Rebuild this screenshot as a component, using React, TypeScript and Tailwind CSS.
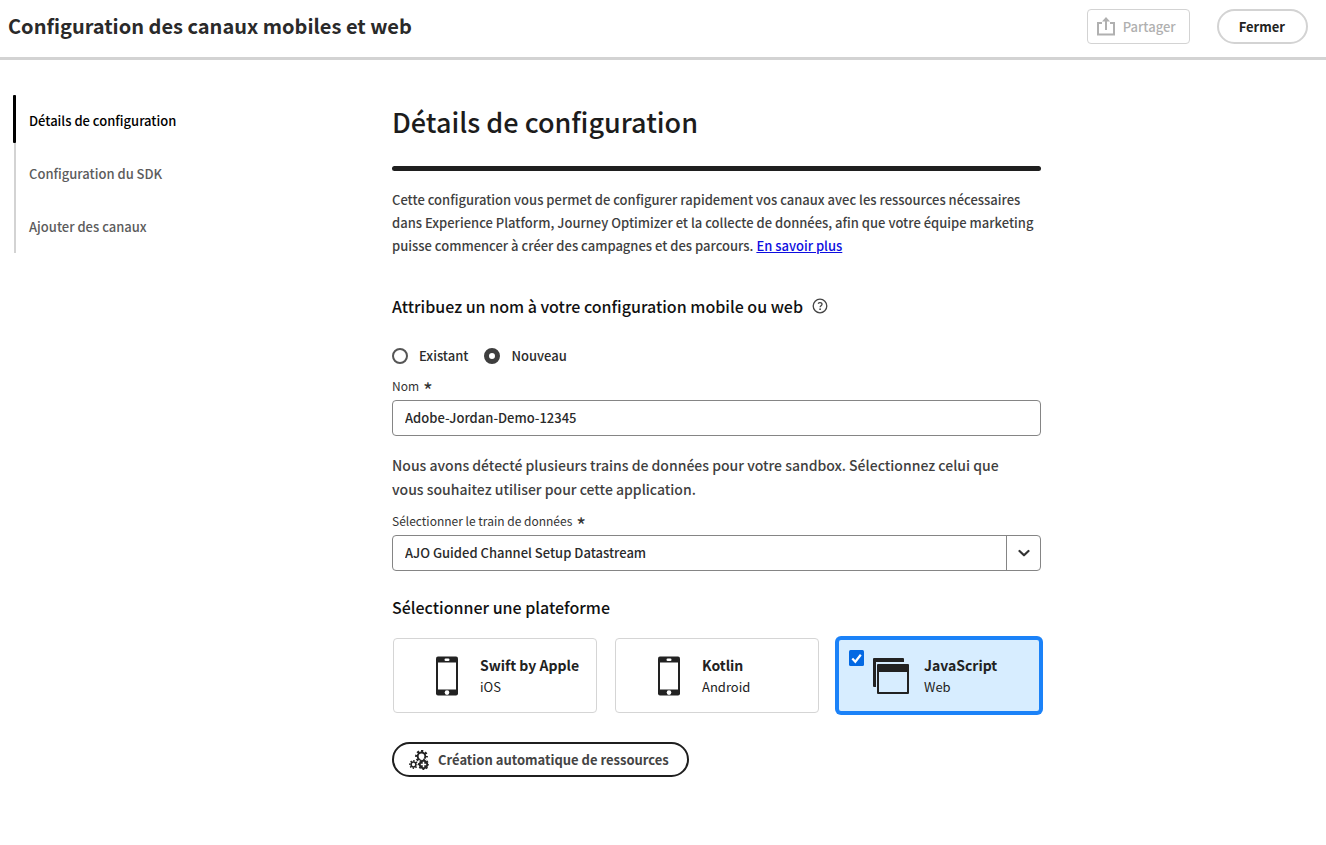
import { useState, type ReactNode } from "react";

function ShareIcon() {
  return (
    <svg viewBox="0 0 18 19" className="h-[19px] w-[18px]" fill="none" stroke="currentColor" strokeWidth="2" aria-hidden="true">
      <path d="M5 6H1V17.500H17V6H13" />
      <path d="M9 13V3" />
      <path d="M9 0l4 4.400H5z" fill="currentColor" stroke="none" />
    </svg>
  );
}

function HelpIcon() {
  return (
    <svg viewBox="0 0 16 16" className="size-4" fill="none" stroke="currentColor" strokeWidth="1.300" aria-hidden="true">
      <circle cx="8" cy="8" r="6.800" />
      <path d="M6.100 5.600C6.600 4.900 7.300 4.600 8 4.600c1.200 0 2 .7 2 1.700 0 1.300-1.900 1.500-1.900 2.900" />
      <circle cx="8.100" cy="11.200" r="0.900" fill="currentColor" stroke="none" />
    </svg>
  );
}

function PhoneIcon() {
  return (
    <svg viewBox="0 0 24 40" className="h-10 w-6" aria-hidden="true">
      <rect x="1" y="0.500" width="22" height="39" rx="2" fill="#222" />
      <rect x="3" y="6.500" width="18" height="27" fill="#fff" />
      <rect x="9.500" y="2.500" width="5" height="2.500" rx="1.200" fill="#fff" />
      <circle cx="12" cy="36.600" r="2.300" fill="#fff" />
    </svg>
  );
}

function WindowsIcon() {
  return (
    <svg viewBox="0 0 36 36" className="size-9" aria-hidden="true">
      <path d="M1 0h29a1 1 0 0 1 1 1v3H3v25H1a1 1 0 0 1-1-1V1a1 1 0 0 1 1-1z" fill="#222" />
      <path d="M5 6h30a1 1 0 0 1 1 1v28a1 1 0 0 1-1 1H5a1 1 0 0 1-1-1V7a1 1 0 0 1 1-1zM6 14v20h28V14z" fill="#222" fillRule="evenodd" />
    </svg>
  );
}

function GearsIcon() {
  return (
    <svg viewBox="0 0 20 20" className="size-5" fill="none" stroke="#222" aria-hidden="true">
      <circle cx="12.500" cy="6.300" r="3.800" strokeWidth="1.900" />
      <circle cx="12.500" cy="6.300" r="5.300" strokeWidth="2.200" strokeDasharray="2.200 1.963" strokeDashoffset="1.100" />
      <circle cx="4.500" cy="14.500" r="2.400" strokeWidth="1.500" />
      <circle cx="4.500" cy="14.500" r="3.600" strokeWidth="1.600" strokeDasharray="1.400 1.427" strokeDashoffset="0.700" />
      <circle cx="14.500" cy="14.500" r="5.900" fill="#fff" stroke="none" />
      <circle cx="14.500" cy="14.500" r="4.700" fill="#222" stroke="none" />
      <circle cx="14.500" cy="14.500" r="4.900" strokeWidth="1.200" strokeDasharray="2 1.848" strokeDashoffset="1" />
      <path d="M14.500 11.800v5.400M11.800 14.500h5.400" stroke="#fff" strokeWidth="1.500" />
    </svg>
  );
}

function RequiredMark() {
  return <span className="pt-2 text-[21px] leading-4">*</span>;
}

const steps = ["Détails de configuration", "Configuration du SDK", "Ajouter des canaux"];

type Platform = { id: string; name: string; system: string; icon: ReactNode };

const platforms: Platform[] = [
  { id: "ios", name: "Swift by Apple", system: "iOS", icon: <PhoneIcon /> },
  { id: "android", name: "Kotlin", system: "Android", icon: <PhoneIcon /> },
  { id: "web", name: "JavaScript", system: "Web", icon: <WindowsIcon /> },
];

function PlatformCard({ platform, checked, onSelect }: { platform: Platform; checked: boolean; onSelect: () => void }) {
  return (
    <label
      className={
        checked
          ? "relative flex h-[75px] cursor-pointer items-center rounded-sm border-2 border-[#1b82f8] bg-[#d7edff] pl-[34px] ring-2 ring-[#1b82f8]"
          : "relative flex h-[75px] cursor-pointer items-center rounded-sm border border-[#d5d5d5] bg-white pl-[35px]"
      }
    >
      <input type="checkbox" checked={checked} onChange={onSelect} className="sr-only" />
      {checked && (
        <svg viewBox="0 0 15 16" className="absolute top-2.5 left-2.5 h-4 w-[15px]" aria-hidden="true">
          <rect width="15" height="16" rx="1.500" fill="#0469e3" />
          <path d="M3.300 8.500l3 3.200 5.500-7" fill="none" stroke="#fff" strokeWidth="2.200" />
        </svg>
      )}
      <span className="flex w-9 shrink-0 justify-center">{platform.icon}</span>
      <span className="ml-[15px] flex flex-col text-[#222]">
        <span className="text-[14px] leading-[22px] font-bold">{platform.name}</span>
        <span className="text-[13px] leading-[22px]">{platform.system}</span>
      </span>
    </label>
  );
}

export default function App() {
  const [mode, setMode] = useState("new");
  const [name, setName] = useState("Adobe-Jordan-Demo-12345");
  const [platform, setPlatform] = useState("web");

  return (
    <div className="min-h-screen bg-white font-['Noto_Sans_CJK_SC','Noto_Sans',sans-serif] text-[#2c2c2c]">
      <header className="flex h-[60px] items-center justify-between border-b-[3px] border-[#d3d3d3] pr-[18px] pb-1 pl-2">
        <h1 className="pb-0.5 text-[20px] leading-7 font-bold text-[#2a2a2a]">Configuration des canaux mobiles et web</h1>
        <div className="flex items-center gap-[27px]">
          <button type="button" disabled className="flex h-[35px] items-center gap-2 rounded-sm border border-[#d3d3d3] pr-[13px] pl-[9px] text-[13px] font-medium text-[#b0b0b0]">
            <ShareIcon />
            Partager
          </button>
          <button type="button" className="h-[35px] rounded-full border-2 border-[#d3d3d3] pr-[21px] pl-5 text-[13px] font-bold text-[#222]">
            Fermer
          </button>
        </div>
      </header>

      <div className="flex pt-[35px]">
        <nav aria-label="Étapes" className="w-[392px] shrink-0 pl-3.5">
          <ol className="flex flex-col gap-px border-l-2 border-[#d3d3d3]">
            {steps.map((step, index) => (
              <li key={step} className="relative flex h-[52px] items-center pl-[13px]">
                {index === 0 && <span className="absolute top-0 -left-[3px] h-12 w-[3px] rounded-[1px] bg-black" />}
                <a
                  href="#"
                  aria-current={index === 0 ? "step" : undefined}
                  className={index === 0 ? "text-[13px] leading-5 font-medium text-black" : "text-[13px] leading-5 font-medium text-[#5c5c5c]"}
                >
                  {step}
                </a>
              </li>
            ))}
          </ol>
        </nav>

        <main className="max-w-[649px] min-w-0 flex-1 pb-16">
          <h2 className="pt-[7px] text-[27px] leading-10 font-medium text-[#1c1c1c]">Détails de configuration</h2>
          <div className="mt-6 h-[5px] rounded-full bg-[#1f1f1f]" />
          <p className="mt-[17px] text-[13px] leading-[23px] font-medium text-[#3f3f3f]">
            Cette configuration vous permet de configurer rapidement vos canaux avec les ressources nécessaires dans Experience
            Platform, Journey Optimizer et la collecte de données, afin que votre équipe marketing puisse commencer à créer des
            campagnes et des parcours.{" "}
            <a href="#" className="text-[#0d0de0] underline">
              En savoir plus
            </a>
          </p>

          <div className="mt-[37px] flex items-center gap-[9px]">
            <h3 className="text-[16px] leading-6 font-medium text-[#111]">Attribuez un nom à votre configuration mobile ou web</h3>
            <button type="button" aria-label="Aide" className="text-[#444]">
              <HelpIcon />
            </button>
          </div>

          <div className="mt-[26px] flex gap-4 text-[13px] leading-6 font-medium">
            <label className="flex items-center gap-[11px]">
              <input
                type="radio"
                name="mode"
                checked={mode === "existing"}
                onChange={() => setMode("existing")}
                className="size-4 appearance-none rounded-full border-2 border-[#555] bg-white checked:border-[5px] checked:border-[#3e3e3e]"
              />
              Existant
            </label>
            <label className="flex items-center gap-[11px]">
              <input
                type="radio"
                name="mode"
                checked={mode === "new"}
                onChange={() => setMode("new")}
                className="size-4 appearance-none rounded-full border-2 border-[#555] bg-white checked:border-[5px] checked:border-[#3e3e3e]"
              />
              Nouveau
            </label>
          </div>

          <label htmlFor="config-name" className="mt-2 flex h-5 items-center gap-1 text-[12px] leading-5 text-[#333]">
            Nom <RequiredMark />
          </label>
          <input
            id="config-name"
            value={name}
            onChange={(event) => setName(event.target.value)}
            className="mt-1 block h-9 w-full rounded-sm border border-[#858585] px-3 pb-0.5 text-[13px] font-medium text-[#2a2a2a]"
          />

          <p className="mt-[17px] max-w-[620px] text-[14px] leading-6 font-medium text-[#3f3f3f]">
            Nous avons détecté plusieurs trains de données pour votre sandbox. Sélectionnez celui que vous souhaitez utiliser pour
            cette application.
          </p>

          <label htmlFor="datastream" className="mt-[10px] flex h-5 items-center gap-1 text-[12px] leading-5 text-[#333]">
            Sélectionner le train de données <RequiredMark />
          </label>
          <div className="relative mt-1">
            <select id="datastream" className="block h-9 w-full appearance-none rounded-sm border border-[#858585] bg-white px-3 text-[13px] font-medium text-[#2a2a2a]">
              <option>AJO Guided Channel Setup Datastream</option>
            </select>
            <span className="pointer-events-none absolute inset-y-0 right-0 flex w-[35px] items-center justify-center border-l border-[#858585]">
              <svg viewBox="0 0 12 8" className="h-2 w-3" fill="none" stroke="#333" strokeWidth="2.200" strokeLinecap="round" strokeLinejoin="round" aria-hidden="true">
                <path d="M1.500 2L6 6.300 10.500 2" />
              </svg>
            </span>
          </div>

          <h3 className="mt-6 text-[16px] leading-6 font-medium text-[#111]">Sélectionner une plateforme</h3>
          <div className="mt-[19px] grid grid-cols-3 gap-[18px] pl-px">
            {platforms.map((item) => (
              <PlatformCard key={item.id} platform={item} checked={platform === item.id} onSelect={() => setPlatform(item.id)} />
            ))}
          </div>

          <button type="button" className="mt-[29px] flex h-[35px] items-center gap-[9px] rounded-full border-2 border-[#1f1f1f] pr-[18px] pl-[15px] text-[13px] font-bold text-[#444]">
            <GearsIcon />
            Création automatique de ressources
          </button>
        </main>
      </div>
    </div>
  );
}
